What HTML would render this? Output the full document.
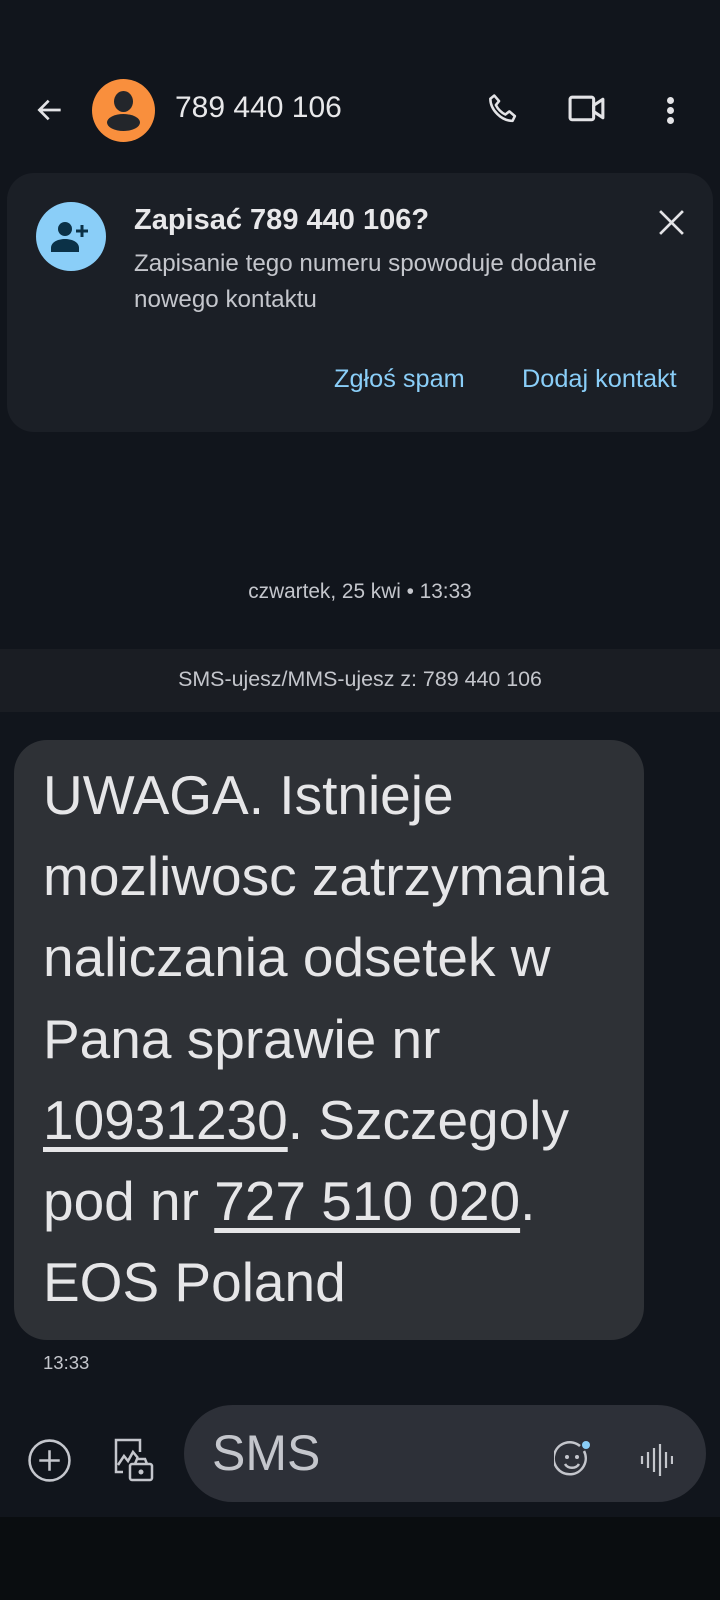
<!DOCTYPE html>
<html><head><meta charset="utf-8"><style>
*{margin:0;padding:0;box-sizing:border-box}
body{width:720px;height:1600px;background:#11151c;font-family:"Liberation Sans",sans-serif;position:relative;overflow:hidden;color:#e3e3e6}
.a{position:absolute;white-space:nowrap}
</style></head><body>
<svg class="a" style="left:34px;top:94px" width="32" height="32" viewBox="0 0 24 24"><path d="M20 12H5M11 5l-7 7 7 7" fill="none" stroke="#e3e3e6" stroke-width="2"/></svg>
<div class="a" style="left:92px;top:79px;width:63px;height:63px;border-radius:50%;background:#f98f3d;overflow:hidden">
<div class="a" style="left:22px;top:12px;width:19px;height:21px;border-radius:50%;background:#23262b"></div>
<div class="a" style="left:15px;top:35px;width:33px;height:17px;border-radius:50%;background:#23262b"></div></div>
<div class="a" style="left:175px;top:91px;font-size:30px;color:#e8e8ea">789 440 106</div>
<svg class="a" style="left:484px;top:90px" width="38" height="38" viewBox="0 0 24 24"><path d="M6.5 3.5l3 3.5-2 2.5c1.3 2.6 3.4 4.7 6 6l2.5-2 3.5 3-1.5 3c-7 0-14-7-14-14z" fill="none" stroke="#e3e3e6" stroke-width="1.6" stroke-linejoin="round"/></svg>
<svg class="a" style="left:567px;top:94px" width="41" height="31" viewBox="0 0 40 30"><rect x="3" y="3" width="23" height="22" rx="2" fill="none" stroke="#e3e3e6" stroke-width="3"/><path d="M26 11l9-6v18l-9-6z" fill="none" stroke="#e3e3e6" stroke-width="3" stroke-linejoin="round"/></svg>
<div class="a" style="left:667px;top:97px;width:7px;height:7px;border-radius:50%;background:#e3e3e6;box-shadow:0 10px 0 #e3e3e6,0 20px 0 #e3e3e6"></div>
<div class="a" style="left:7px;top:173px;width:706px;height:259px;border-radius:27px;background:#1b1f26"></div>
<div class="a" style="left:36px;top:202px;width:70px;height:69px;border-radius:50%;background:#8acef8"></div>
<svg class="a" style="left:49px;top:218px" width="44" height="36" viewBox="0 0 44 36"><circle cx="16" cy="11" r="7" fill="#0b3147"/><path d="M2 34v-4c0-6 7-9 14-9s14 3 14 9v4z" fill="#0b3147"/><path d="M33 7v12M27 13h12" stroke="#0b3147" stroke-width="3"/></svg>
<div class="a" style="left:134px;top:204px;font-size:29px;font-weight:bold;color:#e8e8ea">Zapisać 789 440 106?</div>
<div class="a" style="left:134px;top:246px;font-size:24.2px;line-height:36px;color:#c4c6cc">Zapisanie tego numeru spowoduje dodanie<br>nowego kontaktu</div>
<svg class="a" style="left:658px;top:209px" width="27" height="27" viewBox="0 0 26 26"><path d="M2 2l22 22M24 2L2 24" stroke="#e3e3e6" stroke-width="2.6"/></svg>
<div class="a" style="left:334px;top:365px;font-size:25.3px;color:#8acef8">Zgłoś spam</div>
<div class="a" style="left:522px;top:365px;font-size:25.3px;color:#8acef8">Dodaj kontakt</div>
<div class="a" style="left:0;width:720px;top:580px;text-align:center;font-size:20.8px;color:#c4c6cc">czwartek, 25 kwi • 13:33</div>
<div class="a" style="left:0;top:649px;width:720px;height:63px;background:#1a1d23"></div>
<div class="a" style="left:0;width:720px;top:667px;text-align:center;font-size:21.4px;color:#c4c6cc">SMS-ujesz/MMS-ujesz z: 789 440 106</div>
<div class="a" style="left:14px;top:740px;width:630px;height:600px;border-radius:33px;background:#2e3136"></div>
<div class="a" style="left:43px;top:755px;font-size:55px;line-height:81.2px;color:#e6e6e8">UWAGA. Istnieje<br>mozliwosc zatrzymania<br>naliczania odsetek w<br>Pana sprawie nr<br><u style="text-underline-offset:8px">10931230</u>. Szczegoly<br>pod nr <u style="text-underline-offset:8px">727 510 020</u>.<br>EOS Poland</div>
<div class="a" style="left:43px;top:1352px;font-size:18.5px;color:#c4c6cc">13:33</div>
<svg class="a" style="left:27px;top:1438px" width="45" height="45" viewBox="0 0 44 44"><circle cx="22" cy="22" r="19.5" fill="none" stroke="#c4c6cc" stroke-width="2.5"/><path d="M22 12v20M12 22h20" stroke="#c4c6cc" stroke-width="2.5"/></svg>
<svg class="a" style="left:111px;top:1437px" width="46" height="46" viewBox="0 0 46 46"><path d="M12 35H5V3h24v12" fill="none" stroke="#c4c6cc" stroke-width="2.5"/><path d="M7 28l6-9 4 5 5-9 5 6" fill="none" stroke="#c4c6cc" stroke-width="2.5"/><rect x="19" y="27" width="22" height="16" rx="2" fill="none" stroke="#c4c6cc" stroke-width="2.5"/><path d="M24 27l2-5h8l2 5" fill="none" stroke="#c4c6cc" stroke-width="2.5"/><circle cx="30" cy="35" r="2.5" fill="#c4c6cc"/></svg>
<div class="a" style="left:184px;top:1405px;width:522px;height:97px;border-radius:49px;background:#2d3038"></div>
<div class="a" style="left:212px;top:1424px;font-size:50px;color:#c4c6cc">SMS</div>
<svg class="a" style="left:554px;top:1440px" width="40" height="38" viewBox="0 0 40 38"><path d="M30 11A16 16 0 1 1 26 6" fill="none" stroke="#c4c6cc" stroke-width="2.5"/><circle cx="13" cy="17" r="2" fill="#c4c6cc"/><circle cx="23" cy="17" r="2" fill="#c4c6cc"/><path d="M11 24c3 5 11 5 14 0" fill="none" stroke="#c4c6cc" stroke-width="2.5"/><circle cx="32" cy="5" r="4" fill="#8acef8"/></svg>
<svg class="a" style="left:639px;top:1442px" width="34" height="36" viewBox="0 0 34 36"><path d="M3 14v8M9 10v16M15 6v24M21 2v32M27 10v16M33 14v8" stroke="#c4c6cc" stroke-width="2.2"/></svg>
<div class="a" style="left:0;top:1517px;width:720px;height:83px;background:#0a0d10"></div>
</body></html>
